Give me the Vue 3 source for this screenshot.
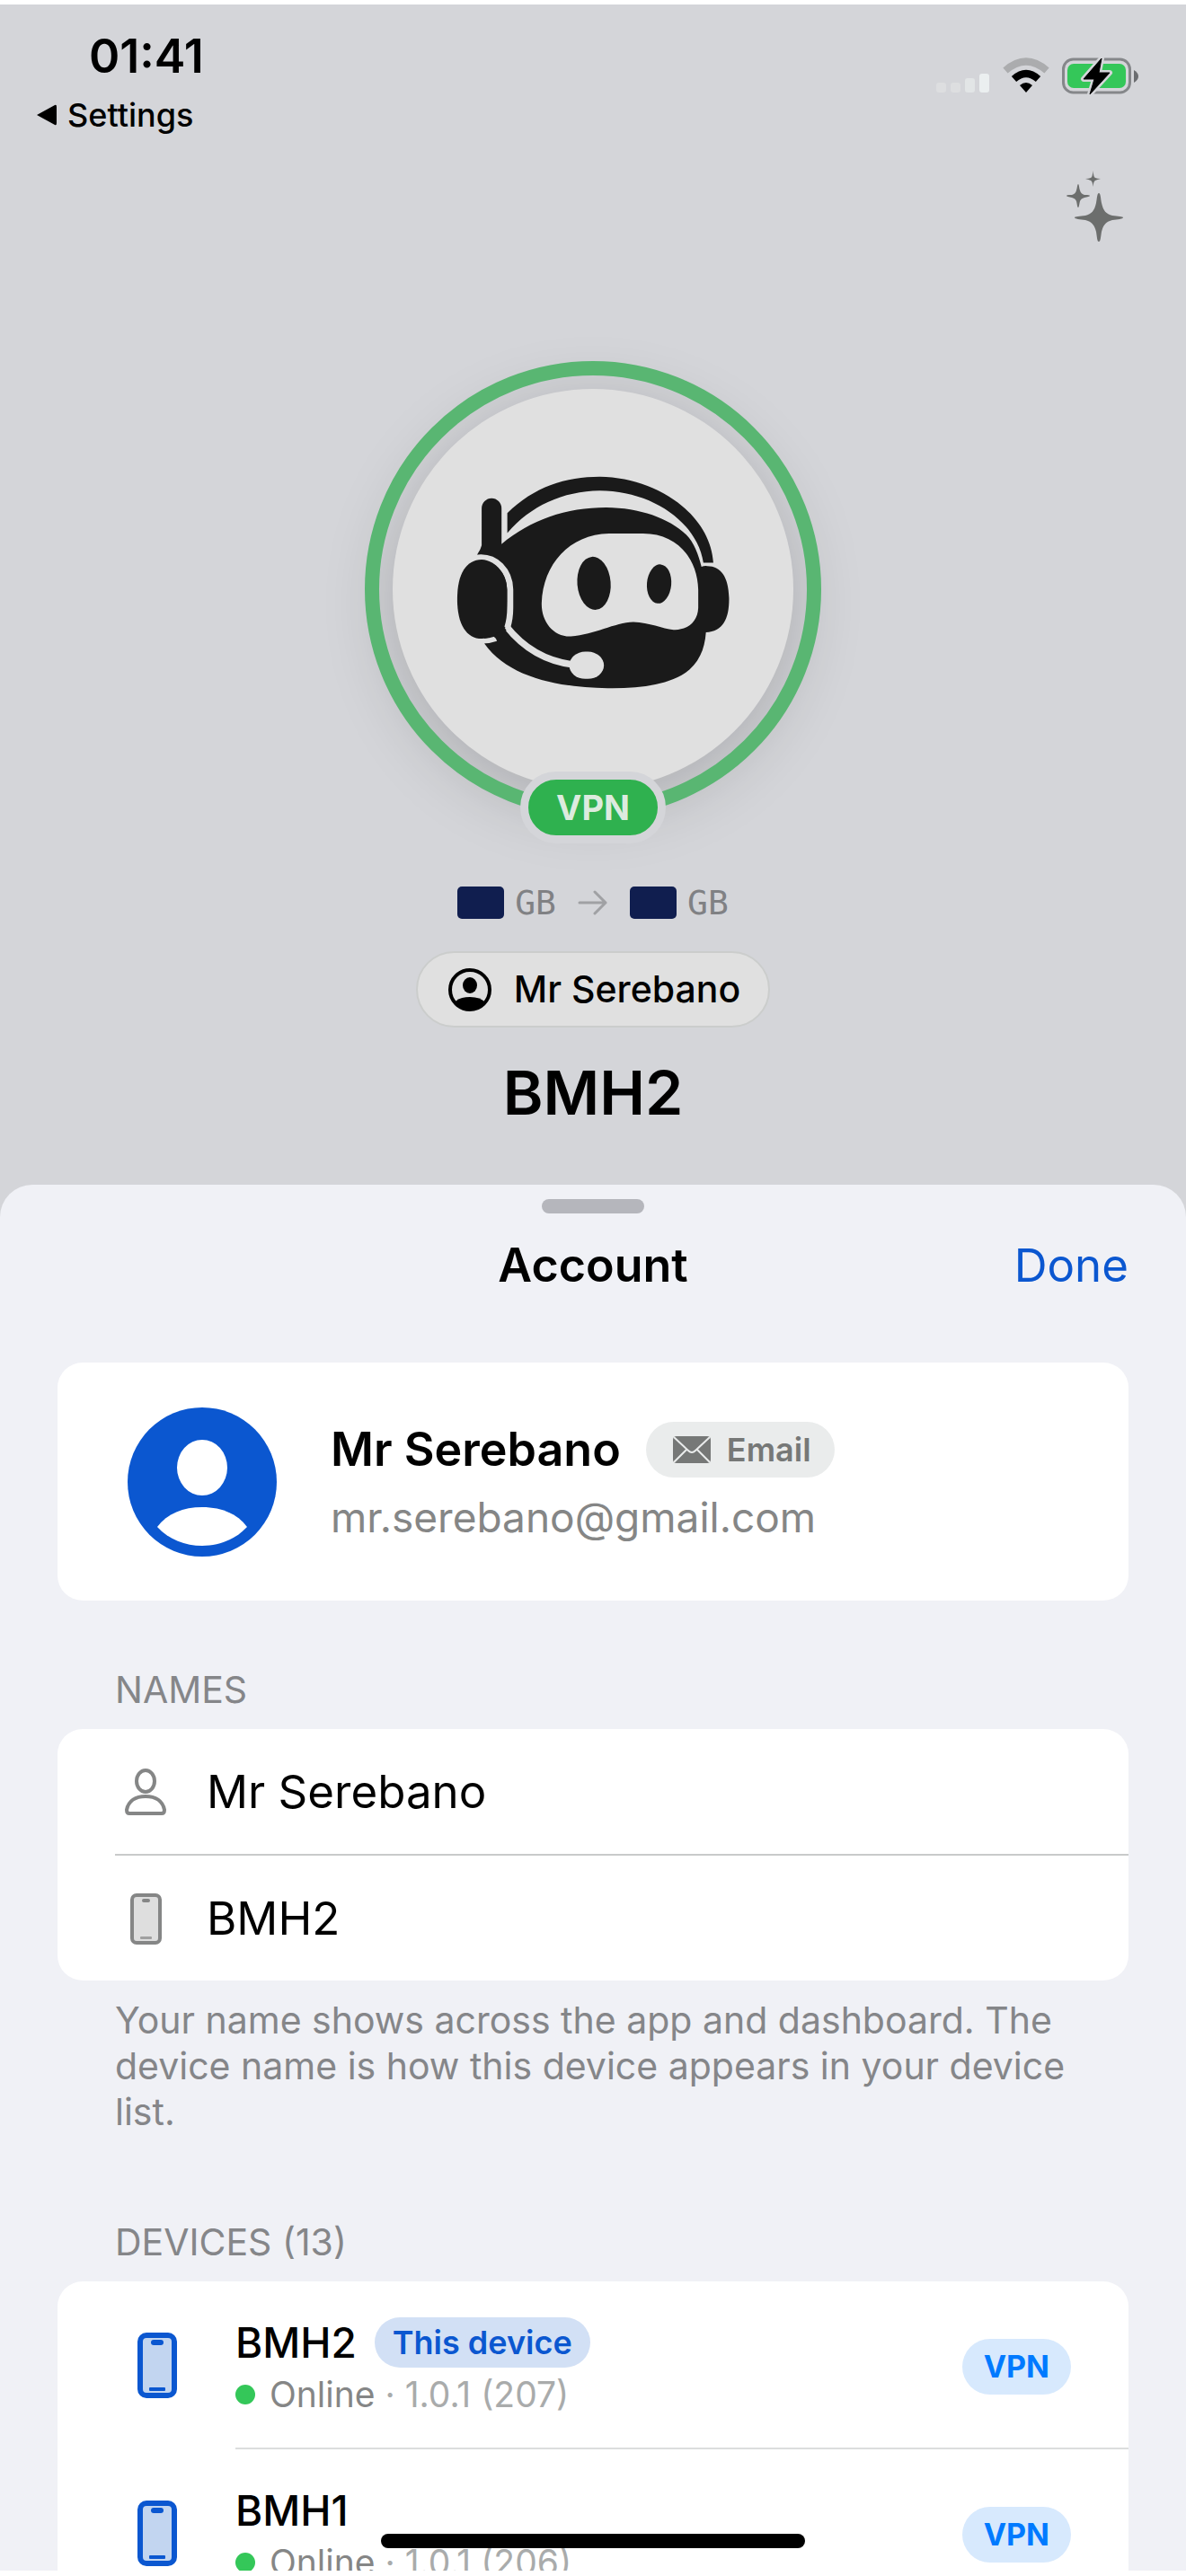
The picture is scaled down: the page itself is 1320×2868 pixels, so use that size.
<script setup>
import { ref } from 'vue';

const userName = ref('Mr Serebano');
const deviceName = ref('BMH2');
const email = 'mr.serebano@gmail.com';
const deviceCount = 13;

const route = [{ code: 'GB' }, { code: 'GB' }];

const devices = [
  { id: 1, name: 'BMH2', current: true, status: 'Online', version: '1.0.1 (207)' },
  { id: 2, name: 'BMH1', current: false, status: 'Online', version: '1.0.1 (206)' },
];
</script>

<template>
  <div class="screen">
    <section class="hero">
      <header class="status-bar">
        <div class="status-left">
          <time class="clock">01:41</time>
          <a href="#" class="back-link">
            <svg width="22" height="24" viewBox="0 0 22 24"><path d="M0 12 L20 1 Q22 0 22 3 V21 Q22 24 20 23 Z" /></svg>
            Settings
          </a>
        </div>
        <div class="status-icons">
          <svg width="60" height="42" viewBox="0 0 60 42">
            <rect x="0" y="28" width="11" height="11" rx="3" fill="#dddee0" />
            <rect x="16" y="28" width="11" height="11" rx="3" fill="#dddee0" />
            <rect x="32" y="23" width="11" height="16" rx="3" fill="#e2e5e6" />
            <rect x="48" y="18" width="11" height="21" rx="3" fill="#ebeff0" />
          </svg>
          <svg width="52" height="42" viewBox="0 0 52 42">
            <path d="M3 14.500 Q26 -5.500 49 14.500" fill="none" stroke="#abacae" stroke-width="8" />
            <path d="M12.500 24 Q26 12 39.500 24" fill="none" stroke="#000" stroke-width="8" />
            <path d="M19 31 Q26 25 33 31 L26 39 Z" />
          </svg>
          <svg width="86" height="42" viewBox="0 0 86 42">
            <rect x="1.500" y="2" width="74" height="37" rx="11" fill="none" stroke="#85878a" stroke-width="3" />
            <rect x="6" y="7" width="65" height="27" rx="7" fill="#34c759" />
            <path d="M80 14 Q85 17 85 21 Q85 25 80 28 Z" fill="#6b6d70" />
            <path d="M44 1 L24 24 H36 L31 41 L53 17 H41 Z" stroke="#d4d5d9" stroke-width="6" stroke-linejoin="round" />
            <path d="M44 1 L24 24 H36 L31 41 L53 17 H41 Z" stroke="#000" stroke-width="1" stroke-linejoin="round" />
          </svg>
        </div>
      </header>

      <div class="toolbar">
        <button type="button" class="icon-btn" aria-label="What's new">
          <svg width="64" height="80" viewBox="0 0 64 80" fill="#6c6e6d">
            <path d="M36 25 C38 25 38 31 39 36 C41 45 44 48 51 50 C57 51 63 51 63 52 C63 54 57 54 51 55 C44 57 41 60 39 68 C38 74 38 79 36 79 C34 79 34 74 33 68 C31 60 28 57 21 55 C15 54 9 54 9 52 C9 51 15 51 21 50 C28 48 31 45 33 36 C34 31 34 25 36 25 Z" />
            <path d="M13 15 C14 15 14 19 15 22 Q16 26 20 27 C23 27 26 27 26 28 C26 29 23 29 20 30 Q16 31 15 34 C14 38 14 41 13 41 C12 41 12 38 11 34 Q10 31 6 30 C3 29 0 29 0 28 C0 27 3 27 6 27 Q10 26 11 22 C12 19 12 15 13 15 Z" />
            <path d="M29.500 0 Q30 7 32 8 Q34 9 38 9 Q34 10 32 11 Q30 12 29.500 18 Q29 12 27 11 Q25 10 21 9 Q25 9 27 8 Q29 7 29.500 0 Z" />
          </svg>
        </button>
      </div>

      <div class="ring">
        <div class="disc">
          <!-- Bot with headset -->
          <svg class="bot" viewBox="350 395 868 660" preserveAspectRatio="none" fill="#1a1a1a">
            <path d="M517 515 C600 435 700 405 805 405 C985 407 1150 520 1159 664 H1128 C1108 540 965 447 805 447 C690 449 590 492 517 575 Z" />
            <path d="M423 640 Q434 624 437 612 V501 A31 31 0 0 1 499 501 V608 C590 535 700 498 825 498 C930 499 1020 530 1075 580 C1098 602 1113 640 1122 676 Q1131 673 1140 674 C1182 674 1206 705 1208 770 C1209 832 1190 872 1136 874 C1132 930 1110 975 1060 1003 C1000 1035 920 1043 830 1042 C680 1040 520 1010 446 908 L440 780 Z" />
            <g fill="none" stroke="#e0e0e0">
              <path d="M418 650 C484 640 525 692 526 745 V800 Q526 832 517 860" stroke-width="19" />
              <path d="M514 856 Q595 955 720 971" stroke-width="20" />
              <path d="M440 900 Q462 900 482 893" stroke-width="15" />
            </g>
            <path d="M437 655 C482 657 515 700 516 745 V780 C516 855 485 893 437 893 C390 893 361 850 361 775 C361 695 390 656 437 655 Z" />
            <path d="M474 886 Q498 870 506 856 L514 868 L490 900 Z" />
            <g fill="#e0e0e0">
              <path d="M834 576 H940 C1050 576 1110 655 1112 745 V800 C1110 845 1075 868 1035 866 C1000 864 960 844 910 843 C850 845 790 881 715 886 C660 888 622 840 624 785 C628 670 710 578 834 576 Z" />
              <rect x="710" y="932" width="108" height="82" rx="50" ry="41" />
            </g>
            <ellipse cx="787" cy="726" rx="52" ry="80" transform="rotate(-5 787 726)" />
            <ellipse cx="990" cy="728" rx="38" ry="59" transform="rotate(5 990 728)" />
          </svg>
        </div>
        <span class="ring-badge">VPN</span>
      </div>

      <div class="route">
        <template v-for="(hop, i) in route" :key="i">
          <svg v-if="i > 0" class="arrow" width="34" height="28" viewBox="0 0 34 28">
            <path d="M2 14 H31 M19 2 L31 14 L19 26" fill="none" stroke="#a0a1a4" stroke-width="3" stroke-linecap="round" stroke-linejoin="round" />
          </svg>
          <span class="flag"></span>
          <span class="code">{{ hop.code }}</span>
        </template>
      </div>

      <button type="button" class="user-pill">
        <svg width="50" height="50" viewBox="0 0 50 50">
          <circle cx="25" cy="25" r="22" fill="none" stroke="#000" stroke-width="4" />
          <ellipse cx="25" cy="20" rx="8" ry="9" />
          <path d="M8 39 Q13 33 25 33 Q37 33 42 39 Q35 48 25 48 Q15 48 8 39 Z" />
        </svg>
        {{ userName }}
      </button>

      <h1 class="hero-title">{{ deviceName }}</h1>
    </section>

    <main class="sheet">
      <div class="grabber"></div>
      <header class="sheet-header">
        <h2>Account</h2>
        <button type="button" class="done">Done</button>
      </header>

      <section class="card profile">
        <svg width="166" height="166" viewBox="0 0 166 166">
          <circle cx="83" cy="83" r="83" fill="#0b57d0" />
          <ellipse cx="83" cy="67" rx="28" ry="31" fill="#fff" />
          <path d="M33 133 C44 118 62 111 83 111 C104 111 122 118 133 133 C120 147 102 154 83 154 C64 154 46 147 33 133 Z" fill="#fff" />
        </svg>
        <div class="profile-text">
          <div class="profile-name">
            <strong>{{ userName }}</strong>
            <span class="email-tag">
              <svg width="42" height="30" viewBox="0 0 42 30">
                <rect width="42" height="30" rx="4" fill="#767877" />
                <path d="M1 1 L17 16 Q21 20 25 16 L41 1 M1 29 L15 15 M41 29 L27 15" fill="none" stroke="#eaecec" stroke-width="2" />
              </svg>
              Email
            </span>
          </div>
          <p class="profile-email">{{ email }}</p>
        </div>
      </section>

      <h3 class="section-title">NAMES</h3>
      <section class="card">
        <label class="name-row">
          <svg width="50" height="60" viewBox="0 0 50 60" fill="none" stroke="#858686" stroke-width="4">
            <ellipse cx="25" cy="18" rx="10" ry="12" />
            <path d="M7 54 Q4 54 4 50 C6 40 14 35 25 35 C36 35 44 40 46 50 Q46 54 43 54 Z" />
          </svg>
          <input v-model="userName" type="text" aria-label="Your name" />
        </label>
        <label class="name-row">
          <svg width="50" height="60" viewBox="0 0 50 60">
            <rect x="10" y="4" width="31" height="53" rx="5" fill="#dedede" stroke="#858686" stroke-width="4" />
            <rect x="21" y="8" width="9" height="4" rx="2" fill="#858686" />
            <rect x="19" y="50" width="13" height="3" rx="1" fill="#a0a0a0" />
          </svg>
          <input v-model="deviceName" type="text" aria-label="Device name" />
        </label>
      </section>
      <p class="footnote">
        Your name shows across the app and dashboard. The device name is how this device appears in your device list.
      </p>

      <h3 class="section-title devices-title">DEVICES ({{ deviceCount }})</h3>
      <ul class="card device-list">
        <li v-for="device in devices" :key="device.id" class="device">
          <svg class="device-icon" width="44" height="73" viewBox="0 0 44 73">
            <rect x="3" y="3" width="38" height="67" rx="7" fill="#c2d5f0" stroke="#0b57d0" stroke-width="6" />
            <rect x="15" y="8" width="14" height="6" rx="3" fill="#0b57d0" />
            <rect x="13" y="61" width="18" height="4" rx="1" fill="#0b57d0" />
          </svg>
          <div class="device-main">
            <div class="device-text">
              <div class="device-name">
                {{ device.name }}
                <span v-if="device.current" class="this-device">This device</span>
              </div>
              <div class="device-status">
                <span class="dot"></span>
                <span>{{ device.status }} <span class="version">· {{ device.version }}</span></span>
              </div>
            </div>
            <span class="vpn-tag">VPN</span>
          </div>
        </li>
      </ul>
    </main>

    <div class="home-indicator"></div>
  </div>
</template>

<style>
body {
  background: #ffffff;
}
</style>

<style scoped>
.screen {
  position: relative;
  box-sizing: border-box;
  display: flex;
  flex-direction: column;
  height: 100vh;
  overflow: hidden;
  border-top: 5px solid #ffffff;
  border-bottom: 6px solid #ffffff;
  background: #d4d5d9;
  color: #000000;
  font-family: Inter, Roboto, sans-serif;
}

button {
  padding: 0;
  border: none;
  background: none;
  color: inherit;
  font-family: inherit;
  cursor: pointer;
}

svg {
  display: block;
  flex-shrink: 0;
}

h1,
h2,
h3,
p,
ul {
  margin: 0;
  padding: 0;
}

/* Upper part */
.hero {
  display: flex;
  flex-direction: column;
  align-items: center;
  flex-shrink: 0;
}

.status-bar {
  align-self: stretch;
  display: flex;
  justify-content: space-between;
  padding: 28px 52px 0 41px;
}

.status-left {
  display: flex;
  flex-direction: column;
  gap: 15px;
}

.clock {
  padding-left: 58px;
  font-size: 52px;
  font-weight: 600;
  line-height: 60px;
}

.back-link {
  display: flex;
  align-items: center;
  gap: 12px;
  color: #000000;
  font-size: 36px;
  font-weight: 500;
  line-height: 40px;
  text-decoration: none;
}

.status-icons {
  display: flex;
  gap: 14px;
  padding-top: 31px;
}

.toolbar {
  align-self: stretch;
  display: flex;
  justify-content: flex-end;
  padding: 42px 69px 0;
}

.ring {
  position: relative;
  box-sizing: border-box;
  display: flex;
  align-items: center;
  justify-content: center;
  width: 508px;
  height: 508px;
  margin-top: 132px;
}

/* Painted over the disc's shadow */
.ring::after {
  content: "";
  position: absolute;
  inset: 0;
  border: 16px solid #59b672;
  border-radius: 50%;
}

.disc {
  box-sizing: border-box;
  display: flex;
  align-items: center;
  justify-content: center;
  width: 446px;
  height: 446px;
  padding-bottom: 14px;
  border-radius: 50%;
  background: #e0e0e0;
  box-shadow: 0 16px 80px rgba(0, 0, 0, 0.2);
}

.bot {
  width: 310px;
  height: 244px;
}

.ring-badge {
  position: absolute;
  z-index: 1;
  bottom: -29px;
  left: 50%;
  transform: translateX(-50%);
  padding: 0 31px;
  border: 9px solid #d4d5d9;
  border-radius: 40px;
  background: #2fb14f;
  color: #dcebdf;
  font-size: 38px;
  font-weight: 700;
  line-height: 62px;
}

.route {
  display: flex;
  align-items: center;
  margin-top: 72px;
}

.flag {
  width: 52px;
  height: 36px;
  border-radius: 5px;
  background: #101e4f;
}

.code {
  margin-left: 12px;
  color: #808184;
  font-family: "DejaVu Sans Mono", monospace;
  font-size: 38px;
  line-height: 46px;
}

.arrow {
  margin: 0 24px;
}

.user-pill {
  display: flex;
  align-items: center;
  gap: 24px;
  margin-top: 31px;
  padding: 0 31px 0 33px;
  border: 2px solid #cbcdcc;
  border-radius: 43px;
  background: #e0e0e0;
  font-size: 41px;
  font-weight: 500;
  line-height: 81px;
}

.hero-title {
  margin: 30px 0 61px;
  font-size: 68px;
  font-weight: 600;
  line-height: 84px;
}

/* Bottom sheet */
.sheet {
  flex: 1;
  min-height: 0;
  overflow: hidden;
  padding: 16px 64px 0;
  border-radius: 36px 36px 0 0;
  background: #f0f1f6;
}

.grabber {
  width: 114px;
  height: 16px;
  margin: 0 auto 26px;
  border-radius: 8px;
  background: #b5b6bc;
}

.sheet-header {
  display: grid;
  grid-template-columns: 1fr auto 1fr;
  margin-bottom: 76px;
  font-size: 52px;
  line-height: 64px;
}

.sheet-header h2 {
  grid-column: 2;
  font-size: 52px;
  font-weight: 600;
}

.done {
  justify-self: end;
  color: #0b57d0;
  font-size: 51px;
  line-height: 64px;
}

.card {
  border-radius: 28px;
  background: #ffffff;
}

.profile {
  display: flex;
  align-items: center;
  gap: 60px;
  padding: 50px 78px 49px;
}

.profile-text {
  display: flex;
  flex-direction: column;
  gap: 16px;
}

.profile-name {
  display: flex;
  align-items: center;
  gap: 28px;
  font-size: 52px;
  line-height: 62px;
}

.profile-name strong {
  font-weight: 600;
}

.email-tag {
  display: flex;
  align-items: center;
  gap: 18px;
  padding: 0 26px 0 30px;
  border-radius: 31px;
  background: #eaecec;
  color: #767877;
  font-size: 36px;
  font-weight: 600;
}

.profile-email {
  color: #858686;
  font-size: 46px;
  line-height: 56px;
}

.section-title {
  margin: 75px 0 20px;
  padding-left: 64px;
  color: #858689;
  font-size: 41px;
  font-weight: 400;
  line-height: 48px;
}

.name-row {
  display: flex;
  align-items: center;
  gap: 43px;
  margin-left: 64px;
  padding-left: 9px;
  height: 139px;
}

.name-row + .name-row {
  border-top: 2px solid #c8caca;
}

.name-row input {
  flex: 1;
  min-width: 0;
  padding: 0;
  border: none;
  outline: none;
  background: none;
  color: #000000;
  font-family: inherit;
  font-size: 51px;
  line-height: 64px;
}

.footnote {
  padding: 19px 64px 0;
  color: #858689;
  font-size: 41px;
  line-height: 51px;
}

.devices-title {
  margin-top: 95px;
}

.device-list {
  list-style: none;
}

.device {
  display: flex;
  align-items: center;
  gap: 65px;
  padding-left: 89px;
}

.device-main {
  flex: 1;
  display: flex;
  align-items: center;
  justify-content: space-between;
  padding: 40px 64px 35px 0;
  border-bottom: 2px solid #dcdddd;
}

.device-name {
  display: flex;
  align-items: center;
  gap: 20px;
  margin-bottom: 6px;
  font-size: 46px;
  font-weight: 500;
  line-height: 56px;
}

.this-device {
  padding: 0 20px;
  border-radius: 28px;
  background: #d2e0f5;
  color: #0b57d0;
  font-size: 36px;
  font-weight: 600;
}

.device-status {
  display: flex;
  align-items: center;
  gap: 16px;
  color: #858686;
  font-size: 39px;
  line-height: 48px;
}

.dot {
  width: 22px;
  height: 22px;
  border-radius: 50%;
  background: #34c759;
}

.version {
  color: #a9abab;
}

.vpn-tag {
  padding: 0 24px;
  border-radius: 31px;
  background: #d7e9fd;
  color: #007aff;
  font-size: 34px;
  font-weight: 700;
  line-height: 62px;
}

.home-indicator {
  position: absolute;
  bottom: 25px;
  left: 50%;
  width: 472px;
  height: 16px;
  border-radius: 8px;
  background: #000000;
  transform: translateX(-50%);
}
</style>
